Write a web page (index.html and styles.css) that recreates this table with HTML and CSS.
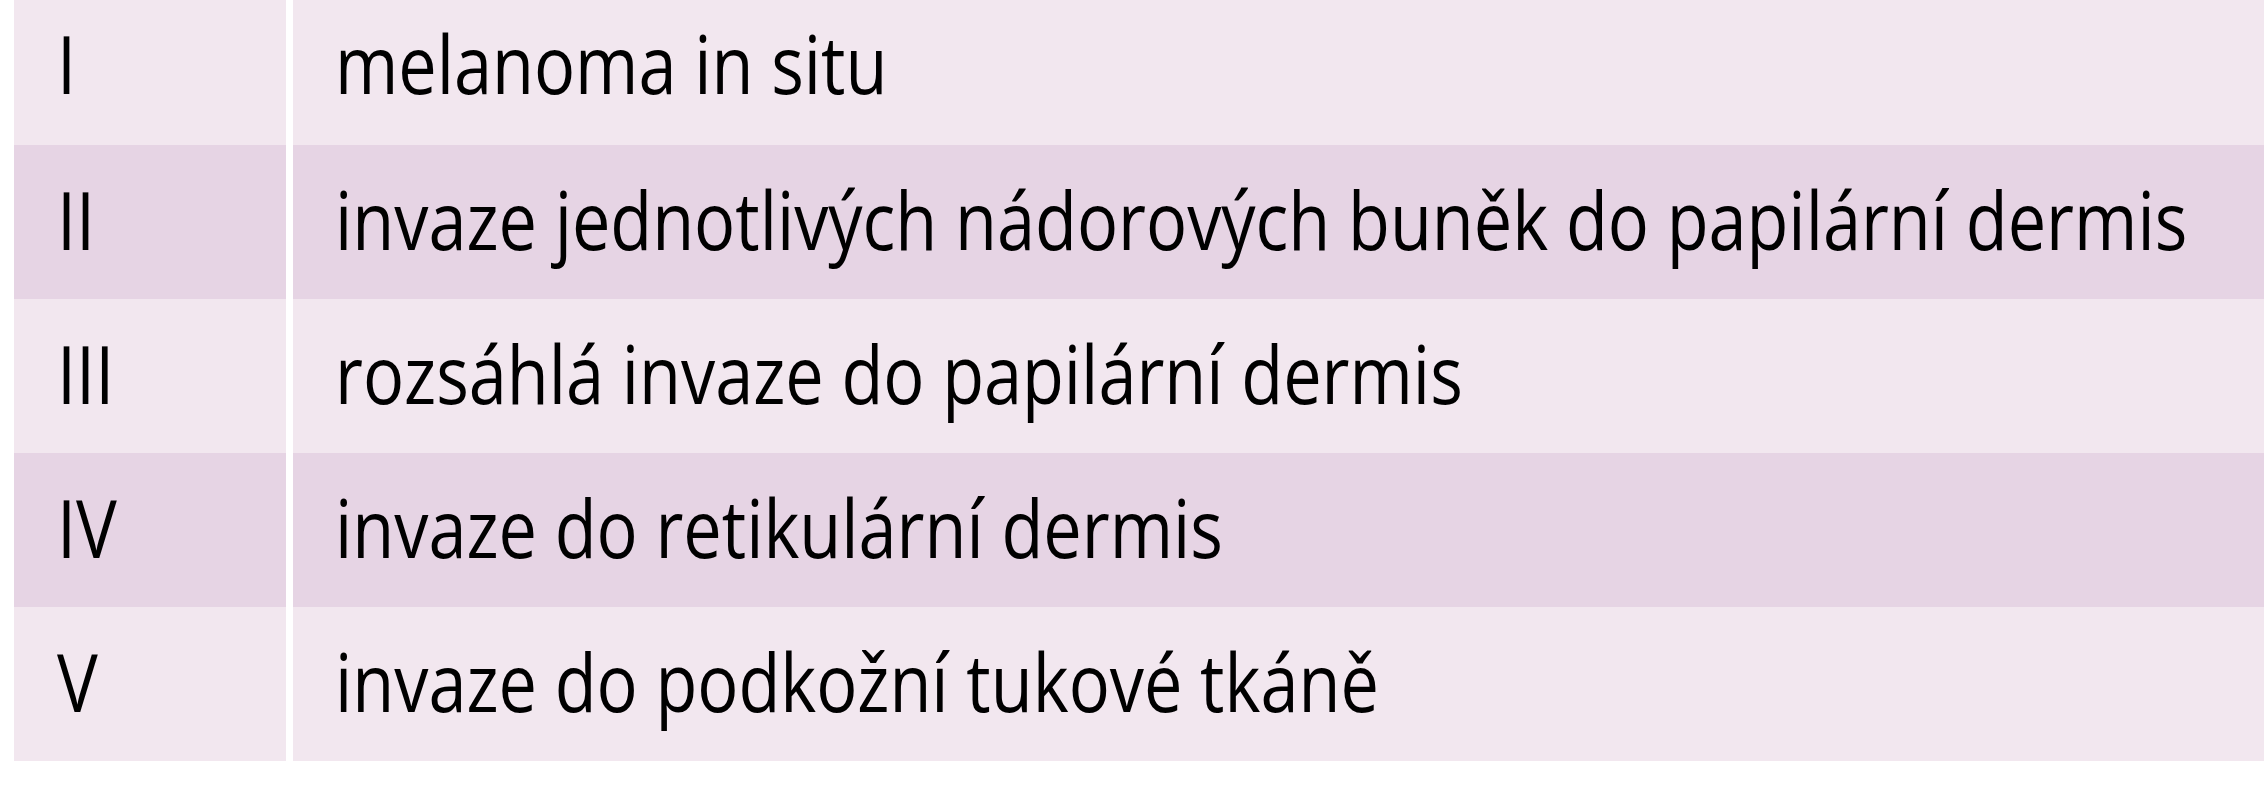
FILE: index.html
```html
<!DOCTYPE html>
<html lang="cs">
<head>
<meta charset="utf-8">
<title>Clark</title>
<link rel="stylesheet" href="styles.css">
</head>
<body>
<div class="table">
  <div class="row light first"><div class="cell num"><span class="txt">I</span></div><div class="cell desc"><span class="txt">melanoma in situ</span></div></div>
  <div class="row dark"><div class="cell num"><span class="txt">II</span></div><div class="cell desc"><span class="txt">invaze jednotlivých nádorových buněk do papilární dermis</span></div></div>
  <div class="row light"><div class="cell num"><span class="txt">III</span></div><div class="cell desc"><span class="txt">rozsáhlá invaze do papilární dermis</span></div></div>
  <div class="row dark"><div class="cell num"><span class="txt">IV</span></div><div class="cell desc"><span class="txt">invaze do retikulární dermis</span></div></div>
  <div class="row light"><div class="cell num"><span class="txt">V</span></div><div class="cell desc"><span class="txt">invaze do podkožní tukové tkáně</span></div></div>
</div>
</body>
</html>
```
FILE: styles.css
```css
html, body {
  margin: 0;
  padding: 0;
  background: #ffffff;
}
.table {
  display: flex;
  flex-direction: column;
  padding-left: 14px;
  font-family: "Open Sans", "Noto Sans", sans-serif;
  font-weight: 500;
  font-size: 80px;
  line-height: 80px;
  color: #000;
}
.row {
  display: flex;
  gap: 7px;
  height: 154px;
}
.row.first {
  height: 145px;
}
.cell {
  box-sizing: border-box;
  padding-top: 34px;
  padding-left: 43px;
  white-space: nowrap;
  overflow: hidden;
}
.row.first .cell {
  padding-top: 23px;
}
.num {
  width: 272px;
  flex: none;
}
.desc {
  flex: 1;
  padding-left: 42px;
}
.txt {
  display: inline-block;
  transform: scaleX(0.855);
  transform-origin: left center;
}
.light .cell { background: #f2e7ef; }
.dark .cell { background: #e6d4e4; }
```
